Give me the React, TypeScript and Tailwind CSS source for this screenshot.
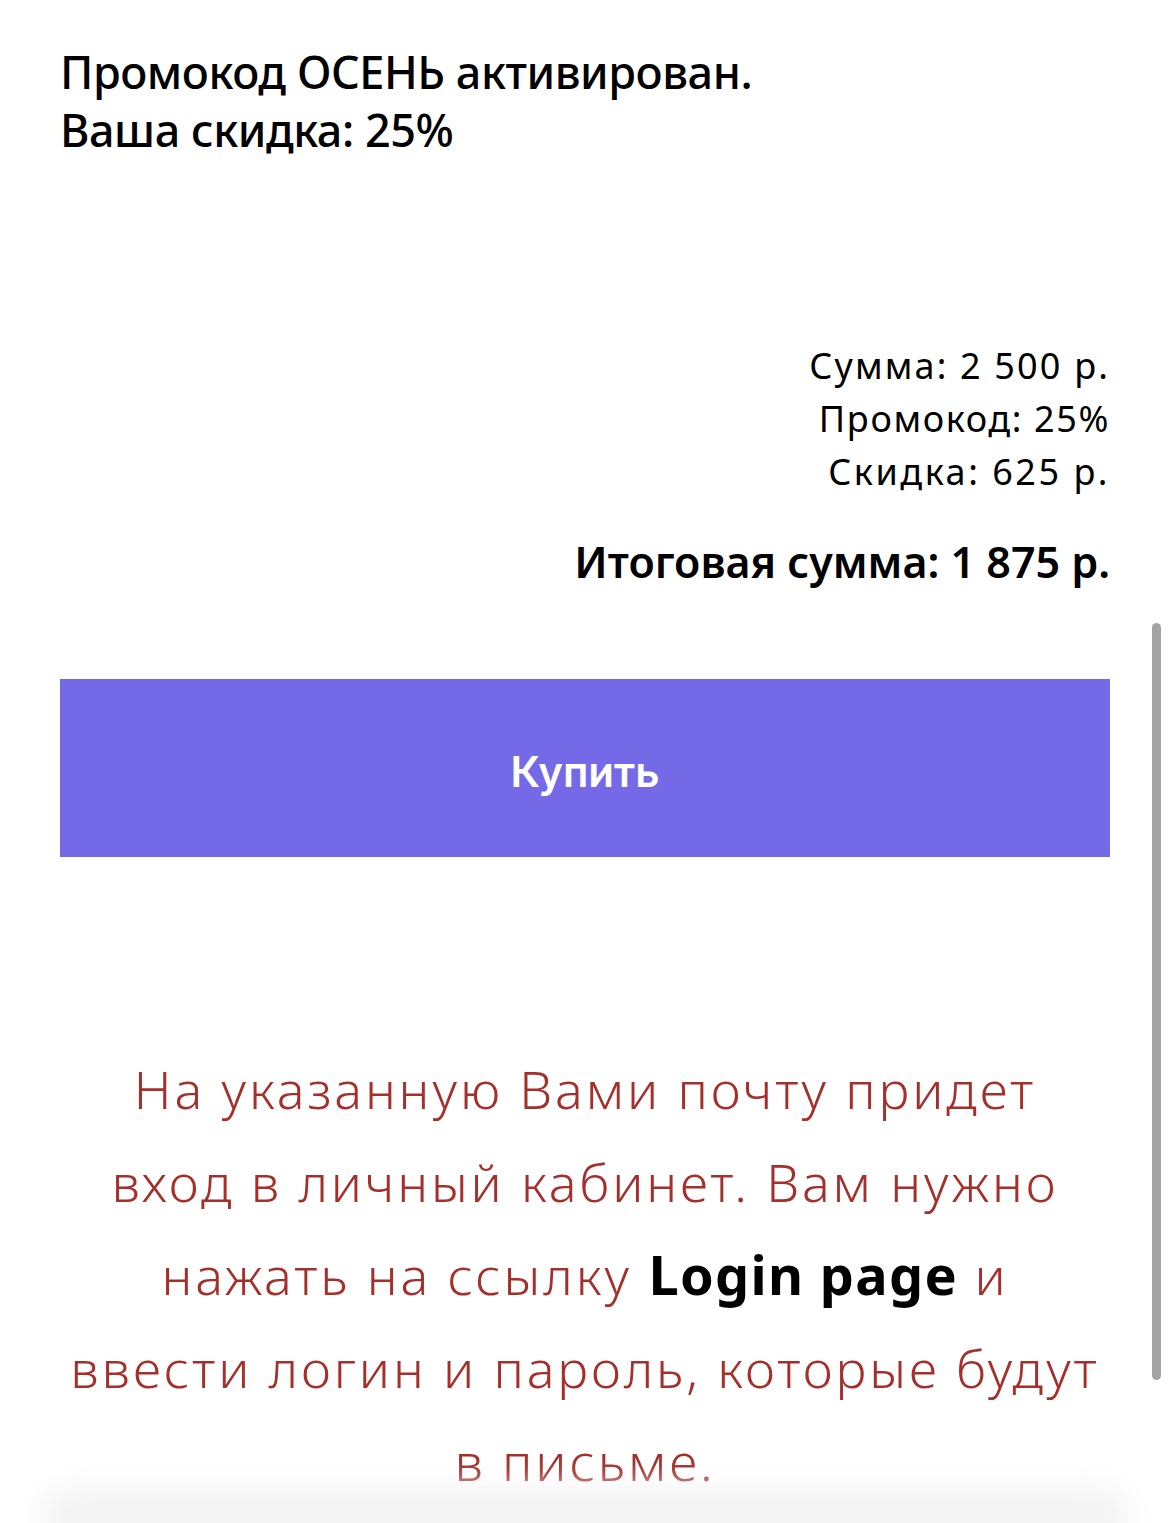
import React from "react";

export default function App() {
  return (
    <div className="relative w-[1170px] h-[1523px] overflow-hidden bg-white" style={{ fontFamily: '"Noto Sans", "Open Sans", sans-serif' }}>
      <div className="px-[60px] pt-[43px]">
        <div className="text-[45px] leading-[58px] font-medium text-black tracking-[-0.01em]">
          <div>Промокод ОСЕНЬ активирован.</div>
          <div>Ваша скидка: 25%</div>
        </div>

        <div className="mt-[180px] flex flex-col items-end text-right text-black">
          <div className="text-[36px] leading-[53px] tracking-[0.06em]">Сумма: 2 500 р.</div>
          <div className="text-[36px] leading-[53px] tracking-[0.045em]">Промокод: 25%</div>
          <div className="text-[36px] leading-[53px] tracking-[0.07em]">Скидка: 625 р.</div>
          <div className="mt-[36px] text-[43px] leading-[56px] font-semibold">Итоговая сумма: 1 875 р.</div>
        </div>

        <button
          className="mt-[89px] flex h-[178px] w-full items-center justify-center bg-[#7469e7] pt-[6px] text-white text-[42px] font-semibold"
          style={{ fontFamily: 'Inter, "Noto Sans", sans-serif' }}
        >
          Купить
        </button>

        <p className="mt-[185px] text-center text-[52px] leading-[93px] font-light tracking-[0.055em] text-[#a52f2a] whitespace-nowrap">
          На указанную Вами почту придет
          <br />
          вход в личный кабинет. Вам нужно
          <br />
          нажать на ссылку <span className="text-[54px] font-bold tracking-[0.025em] text-black">Login page</span> и
          <br />
          ввести логин и пароль, которые будут
          <br />
          в письме.
        </p>
      </div>

      <div className="absolute right-[9px] top-[623px] h-[757px] w-[9px] rounded-full bg-[#a3a3a3]" />
      <div className="absolute bottom-[-24px] left-[40px] right-[40px] h-[60px] rounded-[30px] bg-[#f4f4f4] blur-[14px]" />
    </div>
  );
}
